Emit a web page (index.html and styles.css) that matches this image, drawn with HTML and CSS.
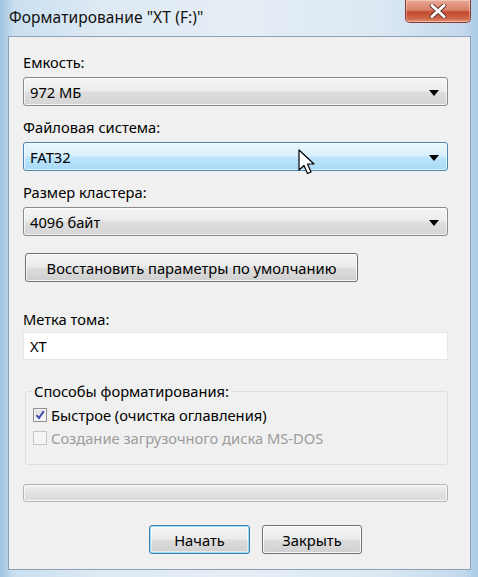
FILE: index.html
```html
<!DOCTYPE html>
<html lang="ru">
<head>
<meta charset="utf-8">
<title>Форматирование</title>
<link rel="stylesheet" href="styles.css">
</head>
<body>
<div class="window">
  <div class="titlebar">
    <span class="title">Форматирование "XT (F:)"</span>
    <div class="close">
      <svg width="22" height="14" viewBox="0 0 22 14"><path d="M5 1.5 L17 12.5 M17 1.5 L5 12.5" stroke="#5a2a20" stroke-width="4.6" stroke-linecap="round"/><path d="M5 1.5 L17 12.5 M17 1.5 L5 12.5" stroke="#fff" stroke-width="3" stroke-linecap="round"/></svg>
    </div>
  </div>
  <div class="client">
    <label class="lbl first">Емкость:</label>
    <div class="combo"><span>972 МБ</span><i class="arrow"></i></div>

    <label class="lbl">Файловая система:</label>
    <div class="combo hot"><span>FAT32</span><i class="arrow"></i>
      <svg class="cursor" width="20" height="30" viewBox="0 0 20 30"><path d="M1 1 L1 21 L6 16.5 L9.5 24.5 L13 23 L9.5 15 L16 15 Z" fill="#fff" stroke="#000" stroke-width="1.2" stroke-linejoin="round"/></svg>
    </div>

    <label class="lbl">Размер кластера:</label>
    <div class="combo"><span>4096 байт</span><i class="arrow"></i></div>

    <button class="btn restore">Восстановить параметры по умолчанию</button>

    <label class="lbl vol">Метка тома:</label>
    <div class="textbox">XT</div>

    <fieldset class="group">
      <legend>Способы форматирования:</legend>
      <div class="check">
        <span class="box checked"><svg width="12" height="12" viewBox="0 0 12 12"><path d="M2.5 6.2 L5 9 L9.8 2.2" fill="none" stroke="#3c4fa8" stroke-width="2"/></svg></span>
        <span>Быстрое (очистка оглавления)</span>
      </div>
      <div class="check disabled">
        <span class="box"></span>
        <span>Создание загрузочного диска MS-DOS</span>
      </div>
    </fieldset>

    <div class="progress"></div>

    <div class="buttons">
      <button class="btn action default">Начать</button>
      <button class="btn action">Закрыть</button>
    </div>
  </div>
</div>
</body>
</html>
```

FILE: styles.css
```css
* { box-sizing: border-box; }
html, body { margin: 0; padding: 0; }
body {
  width: 478px;
  height: 577px;
  overflow: hidden;
  font-family: "Noto Sans", "Open Sans", sans-serif;
  font-size: 14.7px;
  color: #000;
}
.window {
  width: 478px;
  height: 577px;
  display: flex;
  flex-direction: column;
  background: linear-gradient(90deg, #9fc3e2 0%, #c9dff0 3%, #dde9f3 20%, #e6eef5 50%, #dbe8f3 80%, #c3d9ec 97%, #a9c9e4 100%);
}
.titlebar {
  height: 36px;
  flex: none;
  display: flex;
  align-items: flex-start;
  justify-content: space-between;
  padding-left: 9px;
}
.title {
  margin-top: 6px;
  font-size: 15.5px;
  color: #111;
  letter-spacing: 0.1px;
}
.close {
  width: 66px;
  height: 23px;
  margin-right: 7px;
  border: 1px solid #8a3a2e;
  border-top: none;
  border-radius: 0 0 5px 5px;
  background: linear-gradient(180deg, #e8a894 0%, #d9826b 45%, #c34a2d 55%, #d0674a 85%, #e29c7a 100%);
  display: flex;
  align-items: center;
  justify-content: center;
  box-shadow: inset 0 0 0 1px rgba(255,255,255,0.35);
}
.client {
  flex: 1;
  margin: 0 7px 7px 8px;
  border: 1px solid #8f9fb3;
  background: #f0f0f0;
  padding: 0 22px 0 14px;
  display: flex;
  flex-direction: column;
  align-items: stretch;
}
.lbl {
  display: block;
  height: 18px;
  line-height: 18px;
  margin-top: 12px;
  margin-bottom: 6px;
}
.lbl.first { margin-top: 16px; }
.lbl.vol { margin-top: 28px; margin-bottom: 4px; }
.combo {
  position: relative;
  height: 29px;
  border: 1px solid #8a8a8a;
  border-radius: 3px;
  background: linear-gradient(180deg, #f5f5f5 0%, #ececec 48%, #dedede 52%, #d4d4d4 100%);
  display: flex;
  align-items: center;
  justify-content: space-between;
  padding: 0 8px 0 6px;
  box-shadow: inset 0 0 0 1px rgba(255,255,255,0.7);
}
.combo.hot {
  border-color: #4a86b8;
  background: linear-gradient(180deg, #eaf6fd 0%, #d9f0fc 48%, #bee6fd 52%, #a7d9f5 100%);
}
.arrow {
  width: 0;
  height: 0;
  border-left: 5px solid transparent;
  border-right: 5px solid transparent;
  border-top: 6px solid #000;
  margin-top: 2px;
}
.cursor {
  position: absolute;
  left: 274px;
  top: 6px;
}
.btn {
  font-family: inherit;
  font-size: 14.7px;
  color: #000;
  height: 29px;
  border: 1px solid #707070;
  border-radius: 3px;
  background: linear-gradient(180deg, #f4f4f4 0%, #ebebeb 48%, #dddddd 52%, #cfcfcf 100%);
  box-shadow: inset 0 0 0 1px rgba(255,255,255,0.8);
  padding: 0;
}
.restore {
  margin-top: 17px;
  margin-left: 2px;
  width: 333px;
  align-self: flex-start;
}
.textbox {
  height: 28px;
  background: #fff;
  border: 1px solid #e2e8ee;
  line-height: 26px;
  padding-left: 6px;
}
.group {
  margin: 22px 0 0 2px;
  height: 83px;
  border: 1px solid #d5dfe5;
  border-radius: 3px;
  padding: 0 0 0 7px;
  min-width: 0;
}
.group legend {
  padding: 0 2px;
  margin-left: -1px;
  line-height: 18px;
}
.check {
  display: flex;
  align-items: center;
  gap: 4px;
  height: 22px;
  margin-top: 4px;
}
.check + .check { margin-top: 1px; }
.box {
  width: 14px;
  height: 14px;
  border: 1px solid #8f8f8f;
  background: linear-gradient(135deg, #dcdcdc, #fbfbfb);
  box-shadow: inset 0 0 0 1px #f4f4f4;
  display: flex;
  align-items: center;
  justify-content: center;
}
.check.disabled { color: #9c9c9c; }
.check.disabled .box {
  border-color: #c8c8c8;
  background: #f4f4f4;
}
.progress {
  margin-top: 19px;
  height: 18px;
  border: 1px solid #b4b4b4;
  border-radius: 3px;
  background: linear-gradient(180deg, #f3f3f3 0%, #e4e4e4 40%, #d9d9d9 100%);
  box-shadow: inset 0 0 0 1px #f8f8f8;
}
.buttons {
  display: flex;
  gap: 12px;
  margin-top: 23px;
  padding-left: 126px;
}
.action { width: 101px; }
.action + .action { width: 100px; }
.default {
  border-color: #3c7fb1;
  box-shadow: inset 0 0 0 1px #9ed9f6, inset 0 0 0 2px rgba(255,255,255,0.5);
}
```
